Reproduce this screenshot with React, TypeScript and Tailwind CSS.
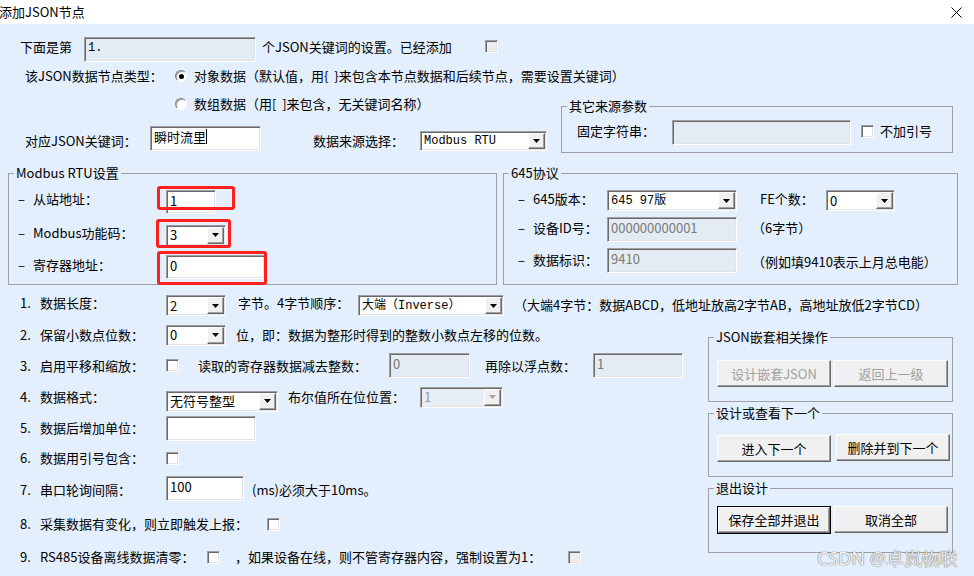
import clsx from 'clsx';
import type { ReactNode } from 'react';

// Win32 style frames
const SUNKEN =
  'border border-t-[#a0a0a0] border-l-[#a0a0a0] border-r-white border-b-white shadow-[inset_1px_1px_0_#696969,inset_-1px_-1px_0_#e3e3e3]';
const RAISED =
  'border border-t-white border-l-white border-r-[#696969] border-b-[#696969] shadow-[inset_-1px_-1px_0_#a0a0a0] bg-[#f0f0f0]';
const MONO = "font-['Liberation_Mono','Noto_Sans_CJK_SC',monospace] text-[12px]";

function Edit({
  value = '',
  className,
  disabled,
  mono,
  caret,
}: {
  value?: string;
  className?: string;
  disabled?: boolean;
  mono?: boolean;
  caret?: boolean;
}) {
  return (
    <div
      className={clsx(
        'shrink-0 flex items-start pl-[3px] pt-[2px] whitespace-nowrap overflow-hidden',
        SUNKEN,
        disabled ? 'bg-[#e3ebf5] text-[#7a7a7a]' : 'bg-white text-black',
        mono && MONO,
        className,
      )}
    >
      {value}
      {caret && <span className="inline-block w-px h-[15px] bg-black" />}
    </div>
  );
}

function Combo({
  value,
  className,
  disabled,
  mono,
}: {
  value: string;
  className?: string;
  disabled?: boolean;
  mono?: boolean;
}) {
  return (
    <div
      className={clsx(
        'shrink-0 flex items-stretch',
        SUNKEN,
        disabled ? 'bg-[#e8eef6] text-[#9a9a9a]' : 'bg-white text-black',
        className,
      )}
    >
      <span className={clsx('flex-1 flex items-center pl-[3px] overflow-hidden whitespace-nowrap', mono && MONO)}>
        {value}
      </span>
      <span className={clsx('w-[17px] m-px flex items-center justify-center', RAISED)}>
        <svg width="7" height="4" viewBox="0 0 7 4">
          <path d="M0 0h7L3.5 4z" fill={disabled ? '#a0a0a0' : '#000'} />
        </svg>
      </span>
    </div>
  );
}

function Check({ disabled }: { disabled?: boolean }) {
  return (
    <span
      className={clsx('block shrink-0 w-[13px] h-[13px]', SUNKEN, disabled ? 'bg-[#ececec]' : 'bg-white')}
    />
  );
}

function Radio({ checked }: { checked?: boolean }) {
  return (
    <span className="shrink-0 w-[12px] h-[12px] rounded-full border border-t-[#808080] border-l-[#808080] border-r-white border-b-white bg-white shadow-[inset_1px_1px_0_#a0a0a0] flex items-center justify-center">
      {checked && <span className="w-[5px] h-[5px] rounded-full bg-black" />}
    </span>
  );
}

function Btn({
  children,
  disabled,
  isDefault,
  className,
}: {
  children: ReactNode;
  disabled?: boolean;
  isDefault?: boolean;
  className?: string;
}) {
  const face = (
    <div
      className={clsx(
        'h-full flex items-center justify-center whitespace-nowrap',
        RAISED,
        disabled ? 'text-[#a0a0a0]' : 'text-black',
      )}
    >
      {children}
    </div>
  );
  return (
    <div className={clsx('shrink-0', isDefault && 'border border-black', className)}>{face}</div>
  );
}

function Group({ title, className, children }: { title: string; className?: string; children?: ReactNode }) {
  return (
    <div className={clsx('relative shrink-0 border border-[#a0a0a0]', className)}>
      <span className="absolute -top-[9px] left-[5px] px-[2px] bg-[#e3effd] leading-[16px] whitespace-nowrap">
        {title}
      </span>
      {children}
    </div>
  );
}

function Num({ n }: { n: string }) {
  return <span className="w-[20px] shrink-0">{n}</span>;
}

// "- 从站地址：" 这种带短横的标签
function Dash({ children, className }: { children: ReactNode; className?: string }) {
  return (
    <span className={clsx('shrink-0 flex items-center', className)}>
      <span className="w-[15px] shrink-0">–</span>
      {children}
    </span>
  );
}

export default function App() {
  return (
    <div className="w-[974px] h-[576px] flex flex-col overflow-hidden relative text-[13px] leading-[16px] text-black font-['Noto_Sans_CJK_SC','Noto_Sans',sans-serif]">
      {/* 标题栏 */}
      <div className="h-[24px] shrink-0 bg-white flex items-center justify-between">
        <span className="-ml-px">添加JSON节点</span>
        <svg width="11" height="11" viewBox="0 0 11 11" className="mr-[12px]">
          <path d="M0.5 0.5l10 10M10.5 0.5l-10 10" stroke="#000" strokeWidth="1" />
        </svg>
      </div>

      <div className="flex-1 bg-[#e3effd] flex flex-col pt-[11px] relative">
        {/* 第几个 */}
        <div className="h-[28px] flex items-center pl-[20px]">
          <span className="w-[64px] shrink-0 mb-[4px]">下面是第</span>
          <Edit className="w-[172px] h-[25px] !text-black" value="1." mono disabled />
          <span className="ml-[6px] w-[223px] shrink-0 mb-[4px]">个JSON关键词的设置。已经添加</span>
          <span className="mb-[5px]">
            <Check disabled />
          </span>
        </div>

        {/* 节点类型 */}
        <div className="h-[26px] flex items-center pl-[25px]">
          <span className="w-[150px] shrink-0">该JSON数据节点类型：</span>
          <Radio checked />
          <span className="ml-[7px] whitespace-pre">对象数据（默认值，用{'{  }'}来包含本节点数据和后续节点，需要设置关键词）</span>
        </div>

        <div className="flex h-[74px]">
          <div className="w-[561px] shrink-0 flex flex-col">
            <div className="h-[30px] flex items-center pl-[175px]">
              <Radio />
              <span className="ml-[7px] whitespace-pre">数组数据（用[  ]来包含，无关键词名称）</span>
            </div>
            <div className="h-[44px] flex items-center pl-[25px]">
              <span className="w-[125px] shrink-0">对应JSON关键词：</span>
              <Edit className="w-[111px] h-[25px] mb-[5px]" value="瞬时流里" caret />
              <span className="ml-[52px] w-[107px] shrink-0">数据来源选择：</span>
              <Combo className="w-[127px] h-[20px]" value="Modbus RTU" mono />
            </div>
          </div>
          <Group title="其它来源参数" className="mt-[17px] w-[392px] h-[47px]">
            <div className="h-full flex items-center pl-[15px] pt-[3px]">
              <span className="w-[95px] shrink-0">固定字符串：</span>
              <Edit className="w-[179px] h-[25px] mt-[2px]" disabled />
              <span className="ml-[10px]">
                <Check />
              </span>
              <span className="ml-[6px]">不加引号</span>
            </div>
          </Group>
        </div>

        {/* Modbus / 645 */}
        <div className="flex mt-[10px] h-[112px]">
          <Group title="Modbus RTU设置" className="ml-[8px] w-[489px] h-[112px]">
            <div className="flex flex-col pt-[10px] pl-[9px]">
              <div className="h-[30px] flex items-center">
                <Dash className="w-[148px]">从站地址：</Dash>
                <Edit className="w-[50px] h-[24px] mt-[6px]" value="1" />
              </div>
              <div className="h-[38px] flex items-center">
                <Dash className="w-[148px]">Modbus功能码：</Dash>
                <Combo className="w-[60px] h-[21px] mt-[4px]" value="3" />
              </div>
              <div className="h-[26px] flex items-center">
                <Dash className="w-[148px]">寄存器地址：</Dash>
                <Edit className="w-[99px] h-[24px] mt-[4px]" value="0" />
              </div>
            </div>
            <div className="absolute left-[148px] top-[12px] w-[78px] h-[24px] border-[3px] border-[#ff1f1f] rounded-[3px]" />
            <div className="absolute left-[147px] top-[45px] w-[75px] h-[29px] border-[3px] border-[#ff1f1f] rounded-[3px]" />
            <div className="absolute left-[148px] top-[77px] w-[110px] h-[34px] border-[3px] border-[#ff1f1f] rounded-[3px]" />
          </Group>

          <Group title="645协议" className="ml-[6px] w-[455px] h-[112px]">
            <div className="flex flex-col pt-[10px] pl-[14px]">
              <div className="h-[30px] flex items-center">
                <Dash className="w-[89px]">645版本：</Dash>
                <Combo className="w-[130px] h-[21px] mt-[3px]" value="645 97版" mono />
                <span className="ml-[23px] w-[66px] shrink-0">FE个数：</span>
                <Combo className="w-[69px] h-[21px] mt-[3px]" value="0" />
              </div>
              <div className="h-[28px] flex items-center">
                <Dash className="w-[89px]">设备ID号：</Dash>
                <Edit className="w-[130px] h-[25px] mt-[3px]" value="000000000001" disabled />
                <span className="ml-[15px]">（6字节）</span>
              </div>
              <div className="h-[36px] flex items-center">
                <Dash className="w-[89px]">数据标识：</Dash>
                <Edit className="w-[130px] h-[25px]" value="9410" disabled />
                <span className="ml-[15px] mt-[4px]">（例如填9410表示上月总电能）</span>
              </div>
            </div>
          </Group>
        </div>

        {/* 1. 数据长度 */}
        <div className="h-[35px] flex items-center pl-[20px]">
          <Num n="1." />
          <span className="w-[126px] shrink-0">数据长度：</span>
          <Combo className="w-[60px] h-[21px] mt-[6px]" value="2" />
          <span className="ml-[12px] w-[120px] shrink-0">字节。4字节顺序：</span>
          <Combo className="w-[146px] h-[21px] mt-[6px]" value="大端（Inverse）" mono />
          <span className="ml-[10px] mt-[5px] whitespace-nowrap">
            （大端4字节：数据ABCD，低地址放高2字节AB，高地址放低2字节CD）
          </span>
        </div>

        <div className="flex h-[253px]">
          <div className="w-[708px] shrink-0 flex flex-col pl-[20px]">
            <div className="h-[30px] flex items-center">
              <Num n="2." />
              <span className="w-[126px] shrink-0">保留小数点位数：</span>
              <Combo className="w-[60px] h-[21px]" value="0" />
              <span className="ml-[10px]">位，即：数据为整形时得到的整数小数点左移的位数。</span>
            </div>
            <div className="h-[31px] flex items-center">
              <Num n="3." />
              <span className="w-[126px] shrink-0">启用平移和缩放：</span>
              <Check />
              <span className="ml-[19px] w-[191px] shrink-0">读取的寄存器数据减去整数：</span>
              <Edit className="w-[81px] h-[25px]" value="0" disabled />
              <span className="ml-[15px] w-[108px] shrink-0">再除以浮点数：</span>
              <Edit className="w-[90px] h-[25px]" value="1" disabled />
            </div>
            <div className="h-[32px] flex items-center">
              <Num n="4." />
              <span className="w-[126px] shrink-0">数据格式：</span>
              <Combo className="w-[112px] h-[21px] mt-[8px]" value="无符号整型" />
              <span className="ml-[10px] w-[132px] shrink-0">布尔值所在位位置：</span>
              <Combo className="w-[83px] h-[21px]" value="1" disabled />
            </div>
            <div className="h-[30px] flex items-center">
              <Num n="5." />
              <span className="w-[126px] shrink-0">数据后增加单位：</span>
              <Edit className="w-[90px] h-[25px]" />
            </div>
            <div className="h-[30px] flex items-center">
              <Num n="6." />
              <span className="w-[126px] shrink-0">数据用引号包含：</span>
              <Check />
            </div>
            <div className="h-[34px] flex items-center">
              <Num n="7." />
              <span className="w-[126px] shrink-0">串口轮询间隔：</span>
              <Edit className="w-[78px] h-[25px] mb-[3px]" value="100" />
              <span className="ml-[8px]">(ms)必须大于10ms。</span>
            </div>
            <div className="h-[34px] flex items-center">
              <Num n="8." />
              <span className="w-[227px] shrink-0">采集数据有变化，则立即触发上报：</span>
              <Check />
            </div>
            <div className="h-[32px] flex items-center">
              <Num n="9." />
              <span className="w-[167px] shrink-0">RS485设备离线数据清零：</span>
              <Check />
              <span className="ml-[15px] w-[333px] shrink-0">，如果设备在线，则不管寄存器内容，强制设置为1：</span>
              <Check disabled />
            </div>
          </div>

          <div className="w-[245px] shrink-0 flex flex-col">
            <Group title="JSON嵌套相关操作" className="mt-[17px] h-[65px]">
              <div className="flex gap-[3px] pt-[22px] pl-[8px]">
                <Btn disabled className="w-[114px] h-[27px]">设计嵌套JSON</Btn>
                <Btn disabled className="w-[114px] h-[27px]">返回上一级</Btn>
              </div>
            </Group>
            <Group title="设计或查看下一个" className="mt-[11px] h-[64px]">
              <div className="flex items-start gap-[5px] pt-[20px] pl-[8px]">
                <Btn className="w-[114px] h-[27px] mt-px">进入下一个</Btn>
                <Btn className="w-[114px] h-[27px]">删除并到下一个</Btn>
              </div>
            </Group>
            <Group title="退出设计" className="mt-[11px] h-[65px]">
              <div className="flex items-start gap-[3px] pt-[17px] pl-[8px]">
                <Btn isDefault className="w-[114px] h-[28px]">保存全部并退出</Btn>
                <Btn className="w-[114px] h-[27px]">取消全部</Btn>
              </div>
            </Group>
          </div>
        </div>

        {/* 水印 */}
        <span className="absolute right-[16px] bottom-[7px] text-[18px] leading-[22px] text-[#f2f2f2] [text-shadow:0_0_1px_#6f6f6f,0_0_1px_#6f6f6f] font-['Noto_Sans',sans-serif]">
          CSDN @卓岚物联
        </span>
      </div>
    </div>
  );
}
